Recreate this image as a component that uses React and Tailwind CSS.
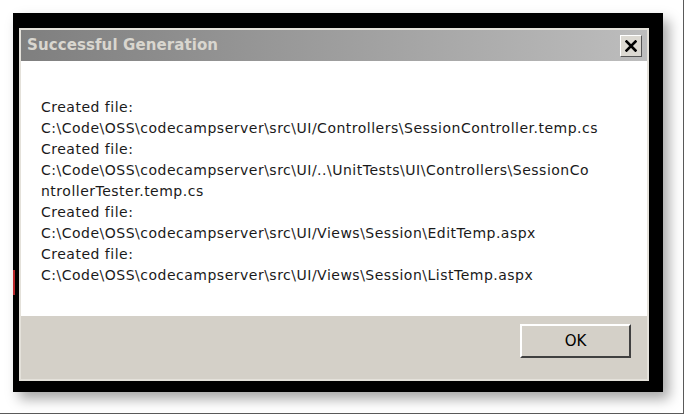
import React from 'react';

const lines = [
  'Created file:',
  'C:\\Code\\OSS\\codecampserver\\src\\UI/Controllers\\SessionController.temp.cs',
  'Created file:',
  'C:\\Code\\OSS\\codecampserver\\src\\UI/..\\UnitTests\\UI\\Controllers\\SessionCo',
  'ntrollerTester.temp.cs',
  'Created file:',
  'C:\\Code\\OSS\\codecampserver\\src\\UI/Views\\Session\\EditTemp.aspx',
  'Created file:',
  'C:\\Code\\OSS\\codecampserver\\src\\UI/Views\\Session\\ListTemp.aspx',
];

const CloseButton = () => (
  <div className="w-[22px] h-[22px] bg-[#dcd9d2] border border-t-white border-l-white border-r-[#555] border-b-[#555] flex items-center justify-center">
    <svg width="12" height="12" viewBox="0 0 12 12">
      <path d="M1.5 1.5 L10.5 10.5 M10.5 1.5 L1.5 10.5" stroke="#000" strokeWidth="2.6" strokeLinecap="square" />
    </svg>
  </div>
);

export default function App() {
  return (
    <div className="w-[688px] h-[417px] bg-white overflow-hidden">
      <div className="w-[684px] h-[414px] border-r border-b border-[#5a5a5a] pt-[13px] pl-[13px]">
        <div className="relative w-[650px] h-[379px] bg-black pl-[6px] pt-[15px] pr-[14px] pb-[11px] shadow-[6px_7px_12px_rgba(0,0,0,0.35)]">
          <div className="absolute left-0 top-[257px] w-[2px] h-[25px] bg-[#b8262a]" />
          <div className="w-[630px] h-[353px] border-2 border-[#e4e1da] flex flex-col">
            <div className="h-[31px] flex items-center justify-between pl-[6px] pr-[5px] bg-gradient-to-r from-[#7f7f7f] to-[#bdbdbd]">
              <span
                className="text-[15px] font-bold text-[#d9d6cf] tracking-[0.1px]"
                style={{ fontFamily: '"DejaVu Sans", sans-serif' }}
              >
                Successful Generation
              </span>
              <CloseButton />
            </div>
            <div
              className="h-[255px] bg-white pt-[36px] pl-[20px] text-[14px] tracking-[0.5px] leading-[21px] text-[#1a1a1a]"
              style={{ fontFamily: '"DejaVu Sans", Verdana, sans-serif' }}
            >
              {lines.map((l, i) => (
                <div key={i} className="whitespace-pre">{l}</div>
              ))}
            </div>
            <div className="flex-1 bg-[#d4d0c8] flex justify-end items-start pt-[8px] pr-[16px]">
              <div
                className="w-[111px] h-[34px] border-2 border-t-white border-l-white border-r-[#404040] border-b-[#404040] bg-[#d4d0c8] flex items-center justify-center text-[15px] text-black"
                style={{ fontFamily: '"DejaVu Sans", sans-serif' }}
              >
                OK
              </div>
            </div>
          </div>
        </div>
      </div>
    </div>
  );
}
